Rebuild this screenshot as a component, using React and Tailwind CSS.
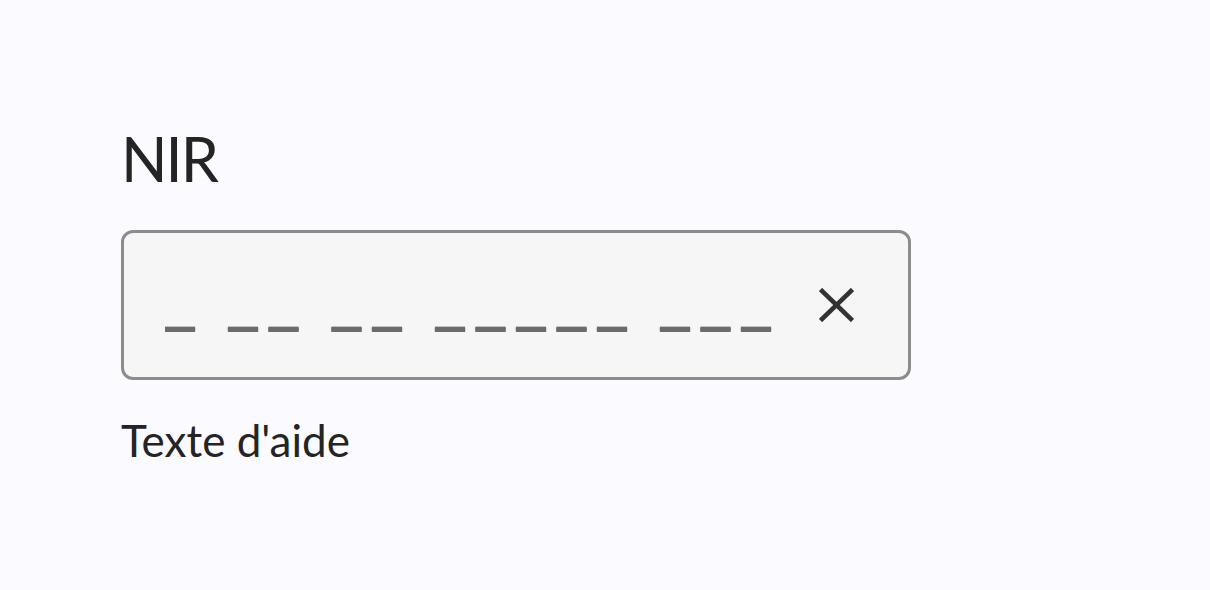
export default function App() {
  return (
    <main className="min-h-screen bg-[#fbfaff] pl-[121px] pt-[128px]">
      <div className="w-[790px] font-['Lato',sans-serif]">
        {/* Label */}
        <label htmlFor="nir" className="block text-[61px] leading-[61px] tracking-[-2px] text-[#242424]">
          NIR
        </label>

        {/* Champ */}
        <div className="mt-[41px] h-[150px] flex items-center rounded-[12px] border-[3px] border-[#8c8c8c] bg-[#f6f6f6] pl-[41px] pr-[54px]">
          <input
            id="nir"
            type="text"
            placeholder="_ __ __ _____ ___"
            className="flex-1 min-w-0 pt-[10px] bg-transparent outline-none font-['Liberation_Mono',monospace] font-bold text-[50px] tracking-[10.5px] [word-spacing:-18px] text-[#242424] placeholder:text-[#6b6b6b] placeholder:[text-shadow:0_1px_0_#6b6b6b,0_2px_0_#6b6b6b,0_3px_0_#6b6b6b]"
          />
          <button className="ml-4 flex items-center justify-center text-[#333]">
            <svg width="35" height="34" viewBox="0 0 35 34" fill="none" stroke="currentColor" strokeWidth="4.6">
              <line x1="1.5" y1="1.5" x2="33.5" y2="32.5" />
              <line x1="33.5" y1="1.5" x2="1.5" y2="32.5" />
            </svg>
          </button>
        </div>

        {/* Aide */}
        <p className="mt-[38px] text-[44px] leading-[44px] text-[#242424]">Texte d'aide</p>
      </div>
    </main>
  )
}
